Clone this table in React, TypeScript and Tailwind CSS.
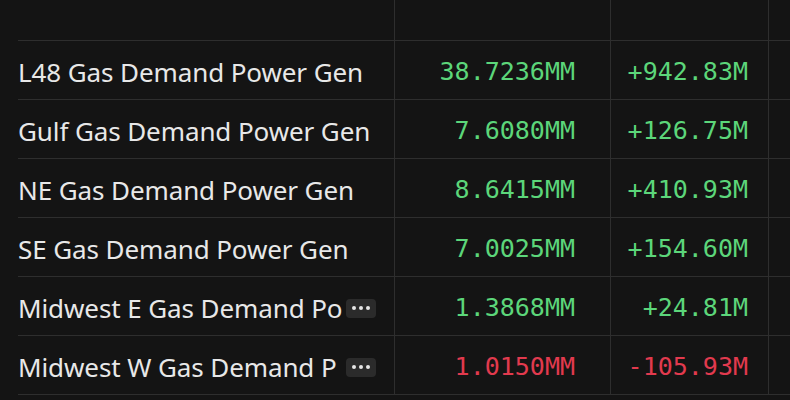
const rows = [
  { name: 'L48 Gas Demand Power Gen', value: '38.7236MM', change: '+942.83M', up: true, more: false },
  { name: 'Gulf Gas Demand Power Gen', value: '7.6080MM', change: '+126.75M', up: true, more: false },
  { name: 'NE Gas Demand Power Gen', value: '8.6415MM', change: '+410.93M', up: true, more: false },
  { name: 'SE Gas Demand Power Gen', value: '7.0025MM', change: '+154.60M', up: true, more: false },
  { name: 'Midwest E Gas Demand Po', value: '1.3868MM', change: '+24.81M', up: true, more: true },
  { name: 'Midwest W Gas Demand P', value: '1.0150MM', change: '-105.93M', up: false, more: true },
]

function MoreButton() {
  return (
    <span className="ml-auto flex h-[19px] w-[30px] shrink-0 items-center justify-center gap-[3px] rounded-[4px] bg-[#2b2b2b]">
      <span className="h-[4px] w-[4px] rounded-full bg-[#e6e6e6]" />
      <span className="h-[4px] w-[4px] rounded-full bg-[#e6e6e6]" />
      <span className="h-[4px] w-[4px] rounded-full bg-[#e6e6e6]" />
    </span>
  )
}

export default function App() {
  return (
    <div className="h-[400px] w-[790px] overflow-hidden bg-[#141414] pl-[18px]">
      <div className="w-[800px]">
        {/* header strip, empty */}
        <div className="flex h-[41px] border-b border-[#2e2e2e]">
          <div className="w-[376px] shrink-0" />
          <div className="w-[216px] shrink-0 border-l border-[#2e2e2e]" />
          <div className="w-[158px] shrink-0 border-l border-[#2e2e2e]" />
          <div className="flex-1 border-l border-[#2e2e2e]" />
        </div>

        {rows.map((r) => (
          <div key={r.name} className="flex h-[59px] border-b border-[#2e2e2e]">
            <div className="flex w-[376px] shrink-0 items-center gap-[2px] pr-[18px] pt-[4px]">
              <span className="whitespace-nowrap text-[26px] tracking-[-0.1px] text-[#e8e8e8] [font-family:'Noto_Sans',sans-serif]">
                {r.name}
              </span>
              {r.more && <MoreButton />}
            </div>
            <div
              className={`flex w-[216px] shrink-0 items-center justify-end border-l border-[#2e2e2e] pr-[35px] pt-[4px] text-[25px] [font-family:'DejaVu_Sans_Mono',monospace] ${r.up ? 'text-[#5cd67a]' : 'text-[#e23a4e]'}`}
            >
              {r.value}
            </div>
            <div
              className={`flex w-[158px] shrink-0 items-center justify-end border-l border-[#2e2e2e] pr-[20px] pt-[4px] text-[25px] [font-family:'DejaVu_Sans_Mono',monospace] ${r.up ? 'text-[#5cd67a]' : 'text-[#e23a4e]'}`}
            >
              {r.change}
            </div>
            <div className="flex-1 border-l border-[#2e2e2e]" />
          </div>
        ))}
      </div>
    </div>
  )
}
